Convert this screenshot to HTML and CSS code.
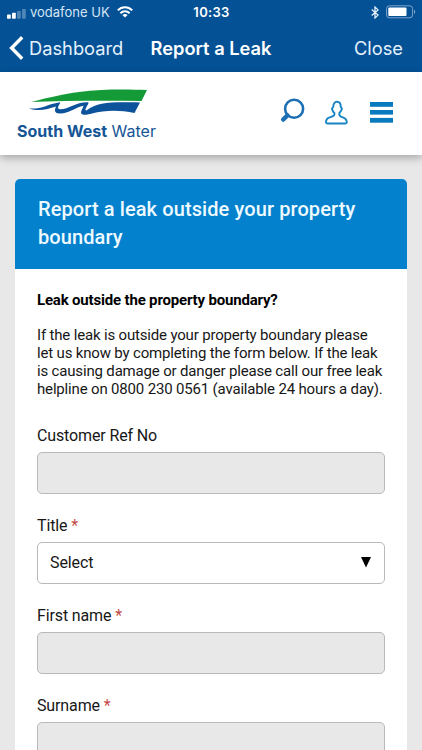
FILE: index.html
```html
<!DOCTYPE html>
<html lang="en">
<head>
    <meta charset="UTF-8">
    <meta name="viewport" content="width=device-width, initial-scale=1.0">
    <title>Report a Leak</title>
    <link rel="stylesheet" href="styles.css">
</head>
<body>
    <div class="app-bar">
        <div class="status-bar">
            <div class="carrier">
                <svg class="signal" width="19" height="10" viewBox="0 0 19 10" fill="#fff">
                    <rect x="0" y="5.5" width="3.8" height="4.2" rx="0.8" />
                    <rect x="5" y="3.8" width="3.8" height="5.9" rx="0.8" />
                    <rect x="10" y="2" width="3.8" height="7.7" rx="0.8" opacity="0.3" />
                    <rect x="15" y="0" width="3.8" height="9.7" rx="0.8" opacity="0.3" />
                </svg>
                <span class="carrier-name">vodafone UK</span>
                <svg class="wifi" width="16" height="12" viewBox="0 0 16 12" fill="none" stroke="#fff" stroke-width="2">
                    <path d="M0.8 4.4C4.8 0.2 11.2 0.2 15.2 4.4" />
                    <path d="M3.4 7.2C6 4.6 10 4.6 12.6 7.2" />
                    <path d="M8 11.6L5.4 9C6.8 7.7 9.2 7.7 10.6 9Z" fill="#fff" stroke="none" />
                </svg>
            </div>
            <span class="time">10:33</span>
            <div class="power">
                <svg class="bluetooth" width="8" height="13" viewBox="0 0 8 13" fill="none" stroke="#e4eff9" stroke-width="1.3">
                    <path d="M0.7 3.6L7 9.1L4 12V1L7 3.9L0.7 9.4" />
                </svg>
                <svg width="30" height="14" viewBox="0 0 30 14">
                    <rect x="0.6" y="0.8" width="26" height="12" rx="2.8" fill="none" stroke="#7fa5cb" />
                    <rect x="2.3" y="2.5" width="18.2" height="8.6" rx="1" fill="#fff" />
                    <path d="M28 4.7C29.7 5.4 29.7 8.2 28 8.9Z" fill="#7fa5cb" />
                </svg>
            </div>
        </div>
        <div class="nav-bar">
            <a class="back">
                <svg width="15" height="24" viewBox="0 0 15 24" fill="none" stroke="#fff" stroke-width="3.4">
                    <path d="M13.2 1.2L2.6 12L13.2 22.8" />
                </svg>
                <span class="back-text">Dashboard</span>
            </a>
            <span class="nav-title">Report a Leak</span>
            <a class="close">Close</a>
        </div>
    </div>

    <div class="site-header">
        <div class="logo">
            <svg width="120" height="28" viewBox="0 0 120 28">
                <path d="M2 13C22 8 34 5 50 3C75 -0.2 98 0.4 118 1L112.5 12C88 11.5 62 11.5 36 12C23 12.2 12 12.5 2 13Z" fill="#149b38" />
                <path d="M0 19.5C12 20.5 19 15 30 13.4C32 13.1 31 14.5 30 16C28.8 18 28.5 20 31 20.2C39 20.5 47 13 58.5 13.2C60.5 13.2 59 15.2 58 17C57 19 55.5 21.5 57.5 21.4C69 12.8 81 13 111 13.4L105.5 24C90 20.6 76 21 63 24.5C59 25.7 52 27 52 23.5C52 21.5 54 19.2 54.5 16.8C46 18.5 37.5 26 29 24.3C25 23.5 25.8 20.3 27 17.5C18 20.5 10 22.5 0 19.5Z" fill="#0d539b" />
            </svg>
            <div class="logo-text"><strong>South West</strong> Water</div>
        </div>
        <div class="tools">
            <svg class="search" width="25" height="26" viewBox="0 0 25 26" fill="none" stroke="#1c6fb3">
                <circle cx="14.1" cy="10.8" r="9" stroke-width="2.6" />
                <path d="M7.5 17.4L3.1 21.6" stroke-width="4.3" stroke-linecap="round" />
            </svg>
            <svg width="23" height="25" viewBox="0 0 23 25" fill="none" stroke="#1785c4" stroke-width="1.9" stroke-linejoin="round">
                <path d="M12 1.8C14.4 1.8 15.8 4 15.8 7L17 8.8C16.6 10.2 15.8 11.6 14.4 13C13.8 15.5 14.6 16.4 17.2 17.2C21 18.3 21.6 19.6 21.8 22C21.8 23 21.2 23.5 20.3 23.5H2.7C1.5 23.5 1 23 1 22C1 19.5 1.8 18.2 4.8 17.3C8.4 16.3 10 15.8 9.4 13C8.1 11.8 7.3 10.4 6.9 8.8L8.2 7C8.2 4 9.6 1.8 12 1.8Z" />
            </svg>
            <svg width="23" height="21" viewBox="0 0 23 21" fill="#087abd">
                <rect width="23" height="4.8" />
                <rect y="8" width="23" height="4.6" />
                <rect y="15.9" width="23" height="4.8" />
            </svg>
        </div>
    </div>

    <div class="card">
        <h1>Report a leak outside your property<br>boundary</h1>
        <form class="card-body">
            <h2>Leak outside the property boundary?</h2>
            <p class="intro">If the leak is outside your property boundary please<br>let us know by completing the form below. If the leak<br>is causing damage or danger please call our free leak<br>helpline on 0800 230 0561 (available 24 hours a day).</p>

            <div class="form-group">
                <label for="customer_ref">Customer Ref No</label>
                <input type="text" id="customer_ref">
            </div>
            <div class="form-group">
                <label for="title">Title <span class="required">*</span></label>
                <div class="select-wrapper">
                    <select id="title">
                        <option>Select</option>
                    </select>
                    <svg class="arrow" width="10" height="11" viewBox="0 0 10 11">
                        <path d="M0 0H10L5 10.5Z" />
                    </svg>
                </div>
            </div>
            <div class="form-group">
                <label for="first_name">First name <span class="required">*</span></label>
                <input type="text" id="first_name">
            </div>
            <div class="form-group">
                <label for="surname">Surname <span class="required">*</span></label>
                <input type="text" id="surname">
            </div>
        </form>
    </div>
</body>
</html>
```
FILE: styles.css
```css
:root {
    --navy: #045196;
    --blue: #0381cd;
    --grey: #e8e8e8;
}

* {
    box-sizing: border-box;
    margin: 0;
    padding: 0;
}

body {
    height: 750px;
    overflow: hidden;
    font-family: Roboto, sans-serif;
    background-color: var(--grey);
    color: #171717;
}

svg {
    display: block;
    flex-shrink: 0;
}

.app-bar {
    height: 72px;
    background-color: var(--navy);
    color: #fff;
    font-family: Inter, sans-serif;
}

.status-bar {
    height: 24px;
    display: grid;
    grid-template-columns: 1fr auto 1fr;
    align-items: center;
    padding: 0 6px 0 7px;
}

.carrier {
    display: flex;
    align-items: center;
}

.signal {
    margin-top: 3px;
}

.carrier-name {
    margin: 0 7px 0 4px;
    font-size: 13px;
    color: #d5e5f4;
    white-space: nowrap;
}

.time {
    font-size: 13px;
    font-weight: 600;
    letter-spacing: 0.3px;
}

.power {
    display: flex;
    align-items: center;
    justify-content: flex-end;
    gap: 7px;
}

.nav-bar {
    height: 48px;
    display: grid;
    grid-template-columns: 1fr auto 1fr;
    align-items: center;
    padding: 0 19px;
    font-size: 18.3px;
    white-space: nowrap;
}

.back {
    display: flex;
    align-items: center;
    gap: 5px;
    margin-left: -10px;
    color: #e4f1fc;
}

.nav-title {
    font-weight: 600;
}

.close {
    text-align: right;
    color: #e4f1fc;
}

.site-header {
    position: relative;
    height: 83px;
    display: flex;
    justify-content: space-between;
    padding: 17px 29px 0 17px;
    background-color: #fff;
    box-shadow: 0 3px 8px rgba(0, 0, 0, 0.28);
}

.logo svg {
    margin-left: 12px;
}

.logo-text {
    margin-top: 4px;
    font-family: Inter, sans-serif;
    font-size: 16px;
    line-height: 20px;
    color: #155596;
    white-space: nowrap;
}

.tools {
    height: 46px;
    display: flex;
    align-items: center;
    gap: 22px;
}

.search {
    margin: 0 -2px 2px 0;
}

.card {
    margin: 24px 15px 0;
    border-radius: 5px;
    background-color: #fff;
    overflow: hidden;
}

h1 {
    height: 90px;
    padding: 16px 22px 0 23px;
    background-color: var(--blue);
    color: #eefaff;
    font-size: 20px;
    font-weight: 500;
    letter-spacing: 0.1px;
    line-height: 28px;
    white-space: nowrap;
}

.card-body {
    padding: 22px 22px 30px;
}

h2 {
    margin-bottom: 17px;
    color: #000;
    font-size: 15px;
    font-weight: 700;
    letter-spacing: -0.18px;
    line-height: 18px;
}

.intro {
    margin-bottom: 28px;
    font-size: 15px;
    letter-spacing: -0.17px;
    line-height: 18px;
    white-space: nowrap;
}

.form-group {
    height: 90px;
}

label {
    display: block;
    margin-bottom: 6px;
    font-size: 16px;
    letter-spacing: -0.13px;
    line-height: 20px;
}

.required {
    color: #c34b46;
}

input, select {
    display: block;
    width: 100%;
    height: 42px;
    padding: 0 12px;
    border: 1px solid #b9b9b9;
    border-radius: 5px;
    background-color: var(--grey);
    color: #171717;
    font-family: inherit;
    font-size: 16px;
    letter-spacing: -0.1px;
}

.select-wrapper {
    position: relative;
}

select {
    appearance: none;
    padding-bottom: 2px;
    background-color: #fff;
}

.arrow {
    position: absolute;
    top: 15px;
    right: 14px;
    pointer-events: none;
}
```
